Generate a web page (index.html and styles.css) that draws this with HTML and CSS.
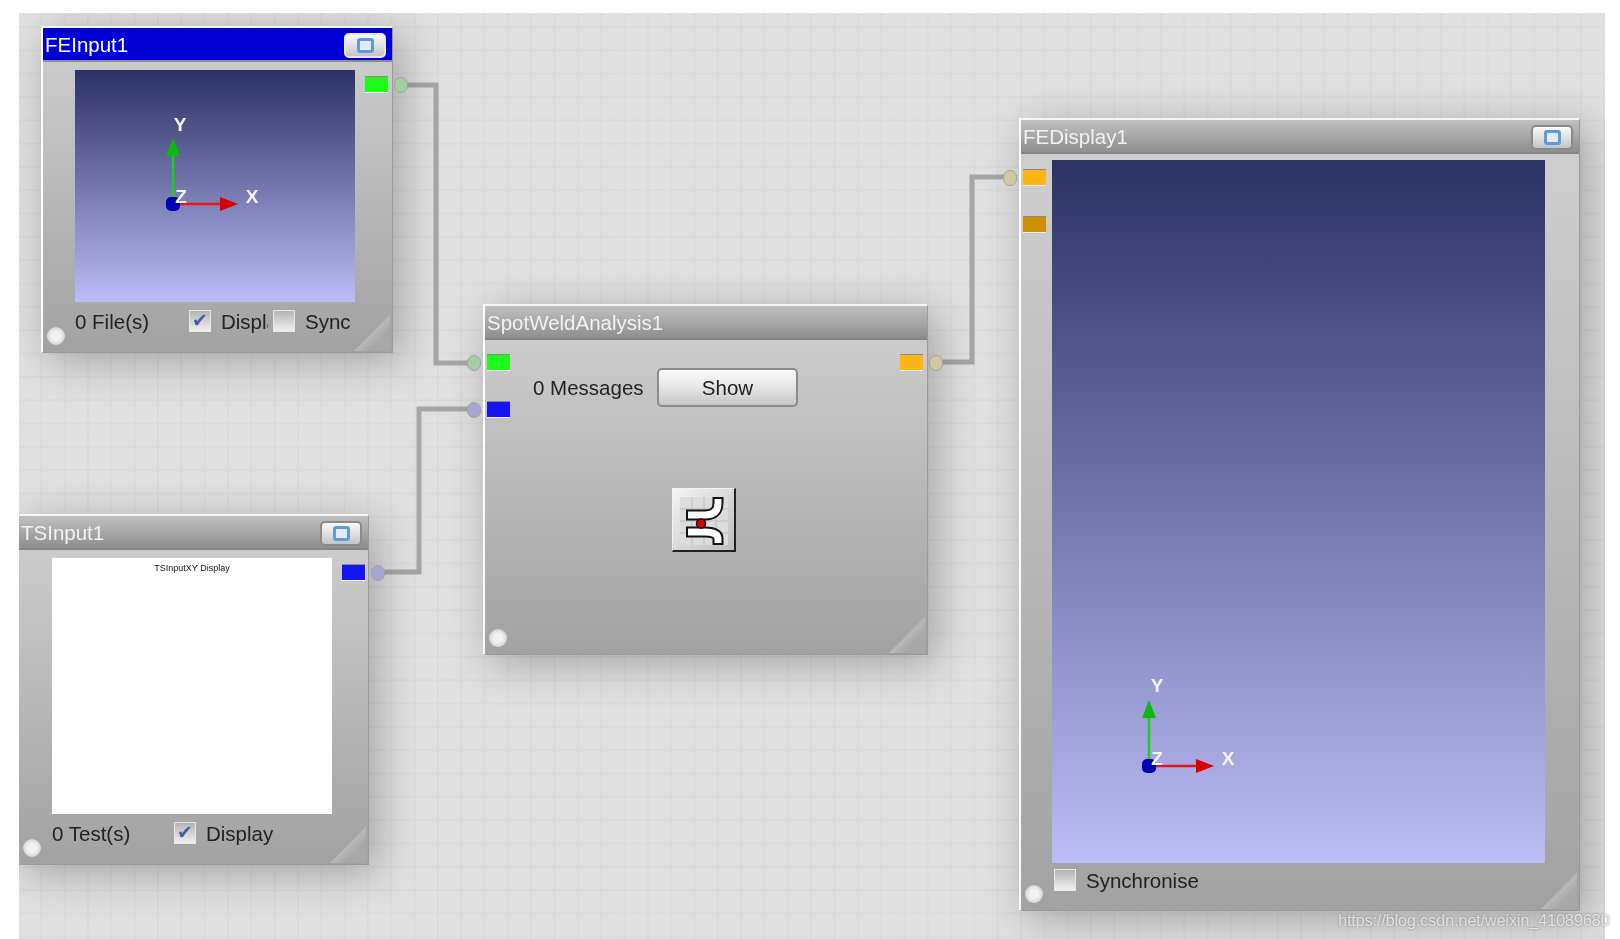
FILE: index.html
```html
<!DOCTYPE html>
<html lang="en">
<head>
    <meta charset="UTF-8">
    <title>Workflow</title>
    <link rel="stylesheet" href="styles.css">
</head>
<body>
    <div class="canvas">
        <svg class="wires" width="1586" height="926">
            <path d="M382 72 H417 V350 H455"/>
            <path d="M359 559 H400 V396 H455"/>
            <path d="M917 349 H953 V164 H991"/>
        </svg>

        <div class="node node-feinput">
            <div class="title title-active">
                <span>FEInput1</span>
                <span class="win-btn win-btn-active"><i></i></span>
            </div>
            <div class="node-row">
                <div class="view view-3d">
                    <svg class="axis" width="120" height="110">
                        <path class="axis-y" d="M20 90 V40"/>
                        <path class="axis-x" d="M20 90 H70"/>
                        <path class="head-y" d="M20 24 L27 42 H13 Z"/>
                        <path class="head-x" d="M85 90 L67 83 V97 Z"/>
                        <rect class="axis-o" x="13" y="83" width="14" height="14" rx="5"/>
                        <text x="27" y="17">Y</text>
                        <text x="99" y="89">X</text>
                        <text x="28" y="89">Z</text>
                    </svg>
                </div>
                <span class="port port-out port-green"></span>
            </div>
            <div class="foot">
                <span class="count count-files">0 File(s)</span>
                <span class="check check-on"></span>
                <span class="label label-displ">Display</span>
                <span class="check"></span>
                <span class="label label-sync">Synchronise</span>
            </div>
            <span class="dot"></span>
            <span class="corner"></span>
        </div>

        <div class="node node-tsinput">
            <div class="title">
                <span>TSInput1</span>
                <span class="win-btn"><i></i></span>
            </div>
            <div class="node-row">
                <div class="view view-plot"><span class="plot-title">TSInputXY Display</span></div>
                <span class="port port-out port-blue"></span>
            </div>
            <div class="foot">
                <span class="count count-tests">0 Test(s)</span>
                <span class="check check-on"></span>
                <span class="label">Display</span>
            </div>
            <span class="dot"></span>
            <span class="corner"></span>
        </div>

        <div class="node node-spotweld">
            <div class="title">
                <span>SpotWeldAnalysis1</span>
            </div>
            <div class="spot-body">
                <div class="ports">
                    <span class="port port-in port-green"></span>
                    <span class="port port-in port-blue"></span>
                </div>
                <div class="spot-main">
                    <div class="messages">
                        <span class="count-msgs">0 Messages</span>
                        <button class="show-btn" type="button">Show</button>
                    </div>
                    <div class="tool-icon">
                        <svg width="62" height="62" viewBox="0 0 62 62">
                            <rect x="7" y="8" width="48" height="48" fill="#dcdcdc"/>
                            <path class="tool-grid" d="M7 20 H55 M7 32 H55 M7 44 H55 M19 8 V56 M31 8 V56 M43 8 V56"/>
                            <path class="band-out" d="M13 26 H32 Q45 26 45 14 V8"/>
                            <path class="band-out" d="M13 43 H32 Q45 43 45 50 V56"/>
                            <path class="band-in" d="M15 26 H32 Q45 26 45 14 V10"/>
                            <path class="band-in" d="M15 43 H32 Q45 43 45 50 V54"/>
                            <circle cx="28" cy="34.500" r="4.500" fill="#e00000" stroke="#111" stroke-width="1.500"/>
                        </svg>
                    </div>
                </div>
                <span class="port port-out port-orange spot-out"></span>
            </div>
            <span class="dot"></span>
            <span class="corner"></span>
        </div>

        <div class="node node-fedisplay">
            <div class="title">
                <span>FEDisplay1</span>
                <span class="win-btn"><i></i></span>
            </div>
            <div class="node-row display-row">
                <div class="ports">
                    <span class="port port-in port-orange"></span>
                    <span class="port port-dark"></span>
                </div>
                <div class="view view-3d view-large">
                    <svg class="axis" width="120" height="110">
                        <path class="axis-y" d="M20 90 V40"/>
                        <path class="axis-x" d="M20 90 H70"/>
                        <path class="head-y" d="M20 24 L27 42 H13 Z"/>
                        <path class="head-x" d="M85 90 L67 83 V97 Z"/>
                        <rect class="axis-o" x="13" y="83" width="14" height="14" rx="5"/>
                        <text x="28" y="16">Y</text>
                        <text x="99" y="89">X</text>
                        <text x="28" y="89">Z</text>
                    </svg>
                </div>
            </div>
            <div class="foot">
                <span class="check"></span>
                <span class="label">Synchronise</span>
            </div>
            <span class="dot"></span>
            <span class="corner"></span>
        </div>
    </div>
    <div class="watermark">https://blog.csdn.net/weixin_41089680</div>
</body>
</html>
```

FILE: styles.css
```css
html, body {
    margin: 0;
    height: 100%;
    background-color: #fff;
    overflow: hidden;
}
body {
    font-family: "Liberation Sans", Arial, sans-serif;
    font-size: 20.500px;
    color: #222;
}
.canvas {
    position: relative;
    margin: 13px 15px 0 19px;
    height: 926px;
    overflow: hidden;
    background-color: #e0e0e0;
    background-image:
        linear-gradient(#dadada 2px, transparent 2px),
        linear-gradient(90deg, #dadada 2px, transparent 2px);
    background-size: 23.330px 23.330px;
    background-position: -2px 13px;
    filter: blur(0.7px);
}
.wires {
    position: absolute;
    left: 0;
    top: 0;
}
.wires path {
    fill: none;
    stroke: #a6a6a6;
    stroke-width: 5;
}

/* nodes sit on a free canvas */
.node {
    position: absolute;
    box-sizing: border-box;
    display: flex;
    flex-direction: column;
    border-top: 2px solid #f4f4f4;
    border-left: 2px solid #fff;
    border-right: 1px solid #9a9a9a;
    border-bottom: 1px solid #9a9a9a;
    background: linear-gradient(#d0d0d0, #a2a2a2);
    box-shadow: 8px 8px 40px rgba(0, 0, 0, 0.28);
}
.node-feinput { left: 22px; top: 13px; width: 352px; height: 327px; }
.node-tsinput { left: -2px; top: 501px; width: 352px; height: 351px; }
.node-spotweld { left: 464px; top: 291px; width: 445px; height: 351px; }
.node-fedisplay { left: 1000px; top: 105px; width: 561px; height: 793px; }

.title {
    box-sizing: border-box;
    height: 34px;
    flex-shrink: 0;
    display: flex;
    align-items: center;
    justify-content: space-between;
    padding: 2px 6px 0 2px;
    color: #f2f2f2;
    background: linear-gradient(#c0c0c0, #8e8e8e);
    border-bottom: 2px solid #858585;
}
.title-active {
    color: #fff;
    background: #0000d6;
    border-bottom-color: #8c8c8c;
}
.win-btn {
    box-sizing: border-box;
    width: 42px;
    height: 25px;
    display: flex;
    align-items: center;
    justify-content: center;
    border: 2px solid #8a8a8a;
    border-radius: 5px;
    background: linear-gradient(#fafafa, #c4c4c4);
}
.win-btn-active {
    border-color: #e8e8e8;
}
.win-btn i {
    box-sizing: border-box;
    width: 17px;
    height: 15px;
    border: 3px solid #5a9bd8;
    border-radius: 3px;
    background-color: #e2eaf8;
}

.node-row {
    display: flex;
    align-items: flex-start;
    padding: 8px 0 0 32px;
}
.node-tsinput .node-row {
    padding-left: 33px;
}
.display-row {
    padding: 6px 0 0 0;
}
.view {
    position: relative;
    flex-shrink: 0;
    width: 280px;
}
.view-3d {
    height: 232px;
    background: linear-gradient(#2b3065, #bcbcf6);
}
.view-large {
    width: 493px;
    height: 703px;
    margin-left: 6px;
}
.view-plot {
    height: 256px;
    background-color: #fff;
    text-align: center;
}
.plot-title {
    display: block;
    padding-top: 5px;
    font-size: 9px;
    color: #111;
}
.axis {
    position: absolute;
    left: 78px;
    top: 44px;
}
.view-large .axis {
    left: 77px;
    top: 516px;
}
.axis .axis-y {
    fill: none;
    stroke: #19cf19;
    stroke-width: 2.500;
}
.axis .axis-x {
    fill: none;
    stroke: #e81414;
    stroke-width: 2.500;
}
.head-y { fill: #0fb80f; }
.head-x { fill: #d80000; }
.axis-o { fill: #0000b4; }
.axis text {
    font-size: 19px;
    font-weight: bold;
    fill: #f4f4f4;
    text-anchor: middle;
}

/* ports */
.port {
    position: relative;
    display: block;
    box-sizing: border-box;
    width: 23px;
    height: 17px;
    flex-shrink: 0;
    border-top: 1px solid #8a8a8a;
    border-bottom: 1px solid #f4f4f4;
}
.port-green { background-color: #1cfb1c; }
.port-blue { background-color: #1414f4; }
.port-orange { background-color: #fdb515; }
.port-dark { background-color: #cf9000; }
.port-out { margin: 6px 0 0 10px; }
.port-in::after, .port-out::after {
    content: "";
    position: absolute;
    top: 0;
    width: 14px;
    height: 16px;
    border-radius: 7px;
    border: 1px solid #a0a0a0;
    box-sizing: border-box;
}
.port-in::after { left: -20px; }
.port-out::after { right: -20px; }
.port-green::after { background-color: #a5cda5; }
.port-blue::after { background-color: #a6a6d4; }
.port-orange::after { background-color: #cfc8a0; }
.ports {
    display: flex;
    flex-direction: column;
    gap: 30px;
    padding: 9px 0 0 2px;
}
.spot-body .ports {
    padding: 14px 0 0 2px;
}

/* bottom strip */
.foot {
    display: flex;
    align-items: center;
    height: 22px;
    margin-top: 8px;
    padding-left: 32px;
}
.node-tsinput .foot {
    padding-left: 33px;
}
.node-fedisplay .foot {
    margin-top: 6px;
    padding-left: 33px;
}
.count, .label {
    padding-top: 2px;
}
.count-files { width: 114px; }
.count-tests { width: 122px; }
.check {
    box-sizing: border-box;
    position: relative;
    width: 22px;
    height: 22px;
    flex-shrink: 0;
    border: 1px solid #e8e8e8;
    background: linear-gradient(#b4b4b4, #f0f0f0);
}
.check-on::after {
    content: "✔";
    position: absolute;
    left: 2px;
    top: -2px;
    font-family: "DejaVu Sans", sans-serif;
    font-size: 19px;
    color: #3f5fa8;
}
.label {
    margin-left: 10px;
    white-space: nowrap;
}
.label-displ {
    width: 47px;
    overflow: hidden;
    margin-right: 5px;
}
.label-sync {
    width: 45px;
    overflow: hidden;
}

.dot {
    position: absolute;
    left: 4px;
    bottom: 7px;
    width: 18px;
    height: 18px;
    border-radius: 50%;
    background: radial-gradient(#f2f2f2 35%, #bcbcbc);
}
.corner {
    position: absolute;
    right: 2px;
    bottom: 1px;
    width: 36px;
    height: 36px;
    clip-path: polygon(100% 0, 100% 100%, 0 100%);
    background: linear-gradient(135deg, #e8e8e8, #a8a8a8 70%);
}

/* spot weld node */
.spot-body {
    flex: 1;
    display: flex;
    align-items: flex-start;
}
.spot-main {
    padding: 28px 0 0 23px;
}
.messages {
    display: flex;
    align-items: center;
    gap: 14px;
}
.count-msgs {
    width: 110px;
    white-space: nowrap;
}
.show-btn {
    box-sizing: border-box;
    width: 141px;
    height: 39px;
    border: 2px solid #8c8c8c;
    border-radius: 5px;
    font-family: inherit;
    font-size: 20.500px;
    color: #222;
    background: linear-gradient(#fafafa, #e8e8e8 45%, #c6c6c6);
}
.tool-icon {
    box-sizing: border-box;
    width: 64px;
    height: 64px;
    margin: 81px 0 0 139px;
    border-top: 1px solid #f2f2f2;
    border-left: 1px solid #f2f2f2;
    border-right: 2px solid #222;
    border-bottom: 2px solid #222;
    background: linear-gradient(135deg, #f4f4f4, #bdbdbd);
}
.tool-icon svg {
    display: block;
}
.tool-grid {
    fill: none;
    stroke: #bcbcbc;
}
.band-out {
    fill: none;
    stroke: #111;
    stroke-width: 11;
}
.band-in {
    fill: none;
    stroke: #fff;
    stroke-width: 7;
}
.spot-out {
    margin: 14px 4px 0 auto;
}

.watermark {
    position: absolute;
    left: 1338px;
    top: 911px;
    font-size: 16.500px;
    letter-spacing: -0.25px;
    white-space: nowrap;
    color: rgba(255, 255, 255, 0.75);
    text-shadow: 0 0 2px rgba(90, 90, 90, 0.8);
}
```
